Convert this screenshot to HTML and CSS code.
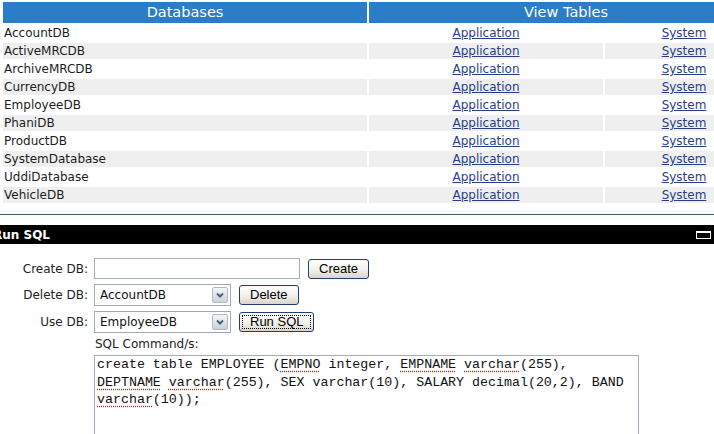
FILE: index.html
```html
<!DOCTYPE html>
<html lang="en">
<head>
<meta charset="utf-8">
<title>Databases</title>
<link rel="stylesheet" href="styles.css">
</head>
<body>
<table class="db-table">
  <colgroup><col class="col-name"><col class="col-app"><col class="col-sys"></colgroup>
  <thead>
    <tr><th>Databases</th><th colspan="2">View Tables</th></tr>
  </thead>
  <tbody>
    <tr><td class="name">AccountDB</td><td><a href="#">Application</a></td><td><a href="#">System</a></td></tr>
    <tr class="alt"><td class="name">ActiveMRCDB</td><td><a href="#">Application</a></td><td><a href="#">System</a></td></tr>
    <tr><td class="name">ArchiveMRCDB</td><td><a href="#">Application</a></td><td><a href="#">System</a></td></tr>
    <tr class="alt"><td class="name">CurrencyDB</td><td><a href="#">Application</a></td><td><a href="#">System</a></td></tr>
    <tr><td class="name">EmployeeDB</td><td><a href="#">Application</a></td><td><a href="#">System</a></td></tr>
    <tr class="alt"><td class="name">PhaniDB</td><td><a href="#">Application</a></td><td><a href="#">System</a></td></tr>
    <tr><td class="name">ProductDB</td><td><a href="#">Application</a></td><td><a href="#">System</a></td></tr>
    <tr class="alt"><td class="name">SystemDatabase</td><td><a href="#">Application</a></td><td><a href="#">System</a></td></tr>
    <tr><td class="name">UddiDatabase</td><td><a href="#">Application</a></td><td><a href="#">System</a></td></tr>
    <tr class="alt"><td class="name">VehicleDB</td><td><a href="#">Application</a></td><td><a href="#">System</a></td></tr>
  </tbody>
</table>

<div class="divider"></div>

<div class="panel-bar">
  <span class="panel-title">Run SQL</span>
  <span class="max-icon"></span>
</div>

<div class="sql-form">
  <label class="field-label">Create DB:</label>
  <div class="field-row">
    <div class="text-input"></div>
    <button class="xp-btn btn-create">Create</button>
  </div>

  <label class="field-label">Delete DB:</label>
  <div class="field-row">
    <div class="xp-select">
      <span class="select-value">AccountDB</span>
      <span class="select-arrow"><svg width="14" height="14" viewBox="0 0 14 14"><path d="M4 5.5 L7 8.5 L10 5.5" fill="none" stroke="#4a5d80" stroke-width="2"/></svg></span>
    </div>
    <button class="xp-btn">Delete</button>
  </div>

  <label class="field-label">Use DB:</label>
  <div class="field-row">
    <div class="xp-select">
      <span class="select-value">EmployeeDB</span>
      <span class="select-arrow"><svg width="14" height="14" viewBox="0 0 14 14"><path d="M4 5.5 L7 8.5 L10 5.5" fill="none" stroke="#4a5d80" stroke-width="2"/></svg></span>
    </div>
    <button class="xp-btn is-focused">Run SQL</button>
  </div>

  <span class="spacer"></span>
  <div class="sql-label">SQL Command/s:</div>

  <span class="spacer"></span>
  <div class="sql-box">create table EMPLOYEE (<span class="spell">EMPNO</span> integer, <span class="spell">EMPNAME</span> <span class="spell">varchar</span>(255), <span class="spell">DEPTNAME</span> <span class="spell">varchar</span>(255), SEX varchar(10), SALARY decimal(20,2), BAND <span class="spell">varchar</span>(10));</div>
</div>
</body>
</html>
```

FILE: styles.css
```css
html, body {
  margin: 0;
  padding: 0;
  overflow: hidden;
  background: #ffffff;
}

body {
  width: 714px;
  height: 434px;
  font-family: "DejaVu Sans", Verdana, sans-serif;
  font-size: 12px;
  color: #1c1c1c;
}

.db-table {
  border-collapse: separate;
  border-spacing: 2px;
  table-layout: fixed;
  width: 764px;
  margin-left: 1px;
}

.col-name { width: 364px; }
.col-app { width: 234px; }
.col-sys { width: 158px; }

.db-table th {
  height: 21px;
  padding: 0;
  background: #2b7dc7;
  color: #ffffff;
  font-weight: normal;
  font-size: 14.5px;
  line-height: 21px;
  text-align: center;
}

.db-table td {
  height: 16px;
  padding: 0;
  line-height: 16px;
  text-align: center;
}

.db-table td.name {
  text-align: left;
  padding-left: 1px;
}

.db-table tr.alt td {
  background: #efefef;
}

.db-table a {
  color: #283f87;
  text-decoration: underline;
}

.divider {
  margin-top: 9px;
  border-top: 1px solid #3e5b69;
}

.panel-bar {
  margin-top: 10px;
  height: 19px;
  background: #000000;
  display: flex;
  align-items: center;
  justify-content: space-between;
  padding-right: 3px;
}

.panel-title {
  margin-left: -7px;
  color: #ffffff;
  font-weight: bold;
  font-size: 12px;
}

.max-icon {
  width: 13px;
  height: 5px;
  border: 1px solid #ffffff;
  border-top-width: 2px;
}

.sql-form {
  display: grid;
  grid-template-columns: 88px 545px;
  column-gap: 6px;
  row-gap: 5px;
  align-items: center;
  padding-top: 14px;
}

.field-label {
  justify-self: end;
  color: #222222;
}

.field-row {
  display: flex;
  align-items: center;
  gap: 8px;
}

.text-input {
  width: 204px;
  height: 19px;
  border: 1px solid #a6adb5;
  background: #ffffff;
}

.xp-select {
  box-sizing: border-box;
  width: 137px;
  height: 22px;
  border: 1px solid #a2a9b3;
  display: flex;
  align-items: center;
  background: #ffffff;
}

.select-value {
  flex: 1;
  padding-left: 5px;
  font-size: 12px;
  color: #111111;
}

.select-arrow {
  box-sizing: border-box;
  width: 16px;
  height: 16px;
  margin-right: 2px;
  border: 1px solid #b3b9c4;
  border-radius: 2px;
  background: linear-gradient(#f4f5f8, #cdd2da);
  display: flex;
  align-items: center;
  justify-content: center;
}

.xp-btn {
  height: 20px;
  padding: 0 10px;
  border: 1px solid #1f3f6e;
  border-radius: 3px;
  background: linear-gradient(#ffffff 0%, #f1f0eb 55%, #d9d5cb 100%);
  font-family: "Liberation Sans", Arial, sans-serif;
  font-size: 13px;
  color: #000000;
  line-height: 18px;
}

.btn-create {
  margin-left: 0;
}

.xp-btn.is-focused {
  outline: 1px dotted #000000;
  outline-offset: -4px;
}

.sql-label {
  line-height: 12px;
  padding-left: 1px;
  color: #222222;
}

.sql-box {
  box-sizing: border-box;
  height: 100px;
  border: 1px solid #a6adb5;
  padding: 0 2px;
  font-family: "Liberation Mono", "Courier New", monospace;
  font-size: 13.3px;
  line-height: 17.5px;
  color: #111111;
  white-space: pre-wrap;
}

.spell {
  text-decoration: underline dotted #d01818;
  text-underline-offset: 3px;
}
```
